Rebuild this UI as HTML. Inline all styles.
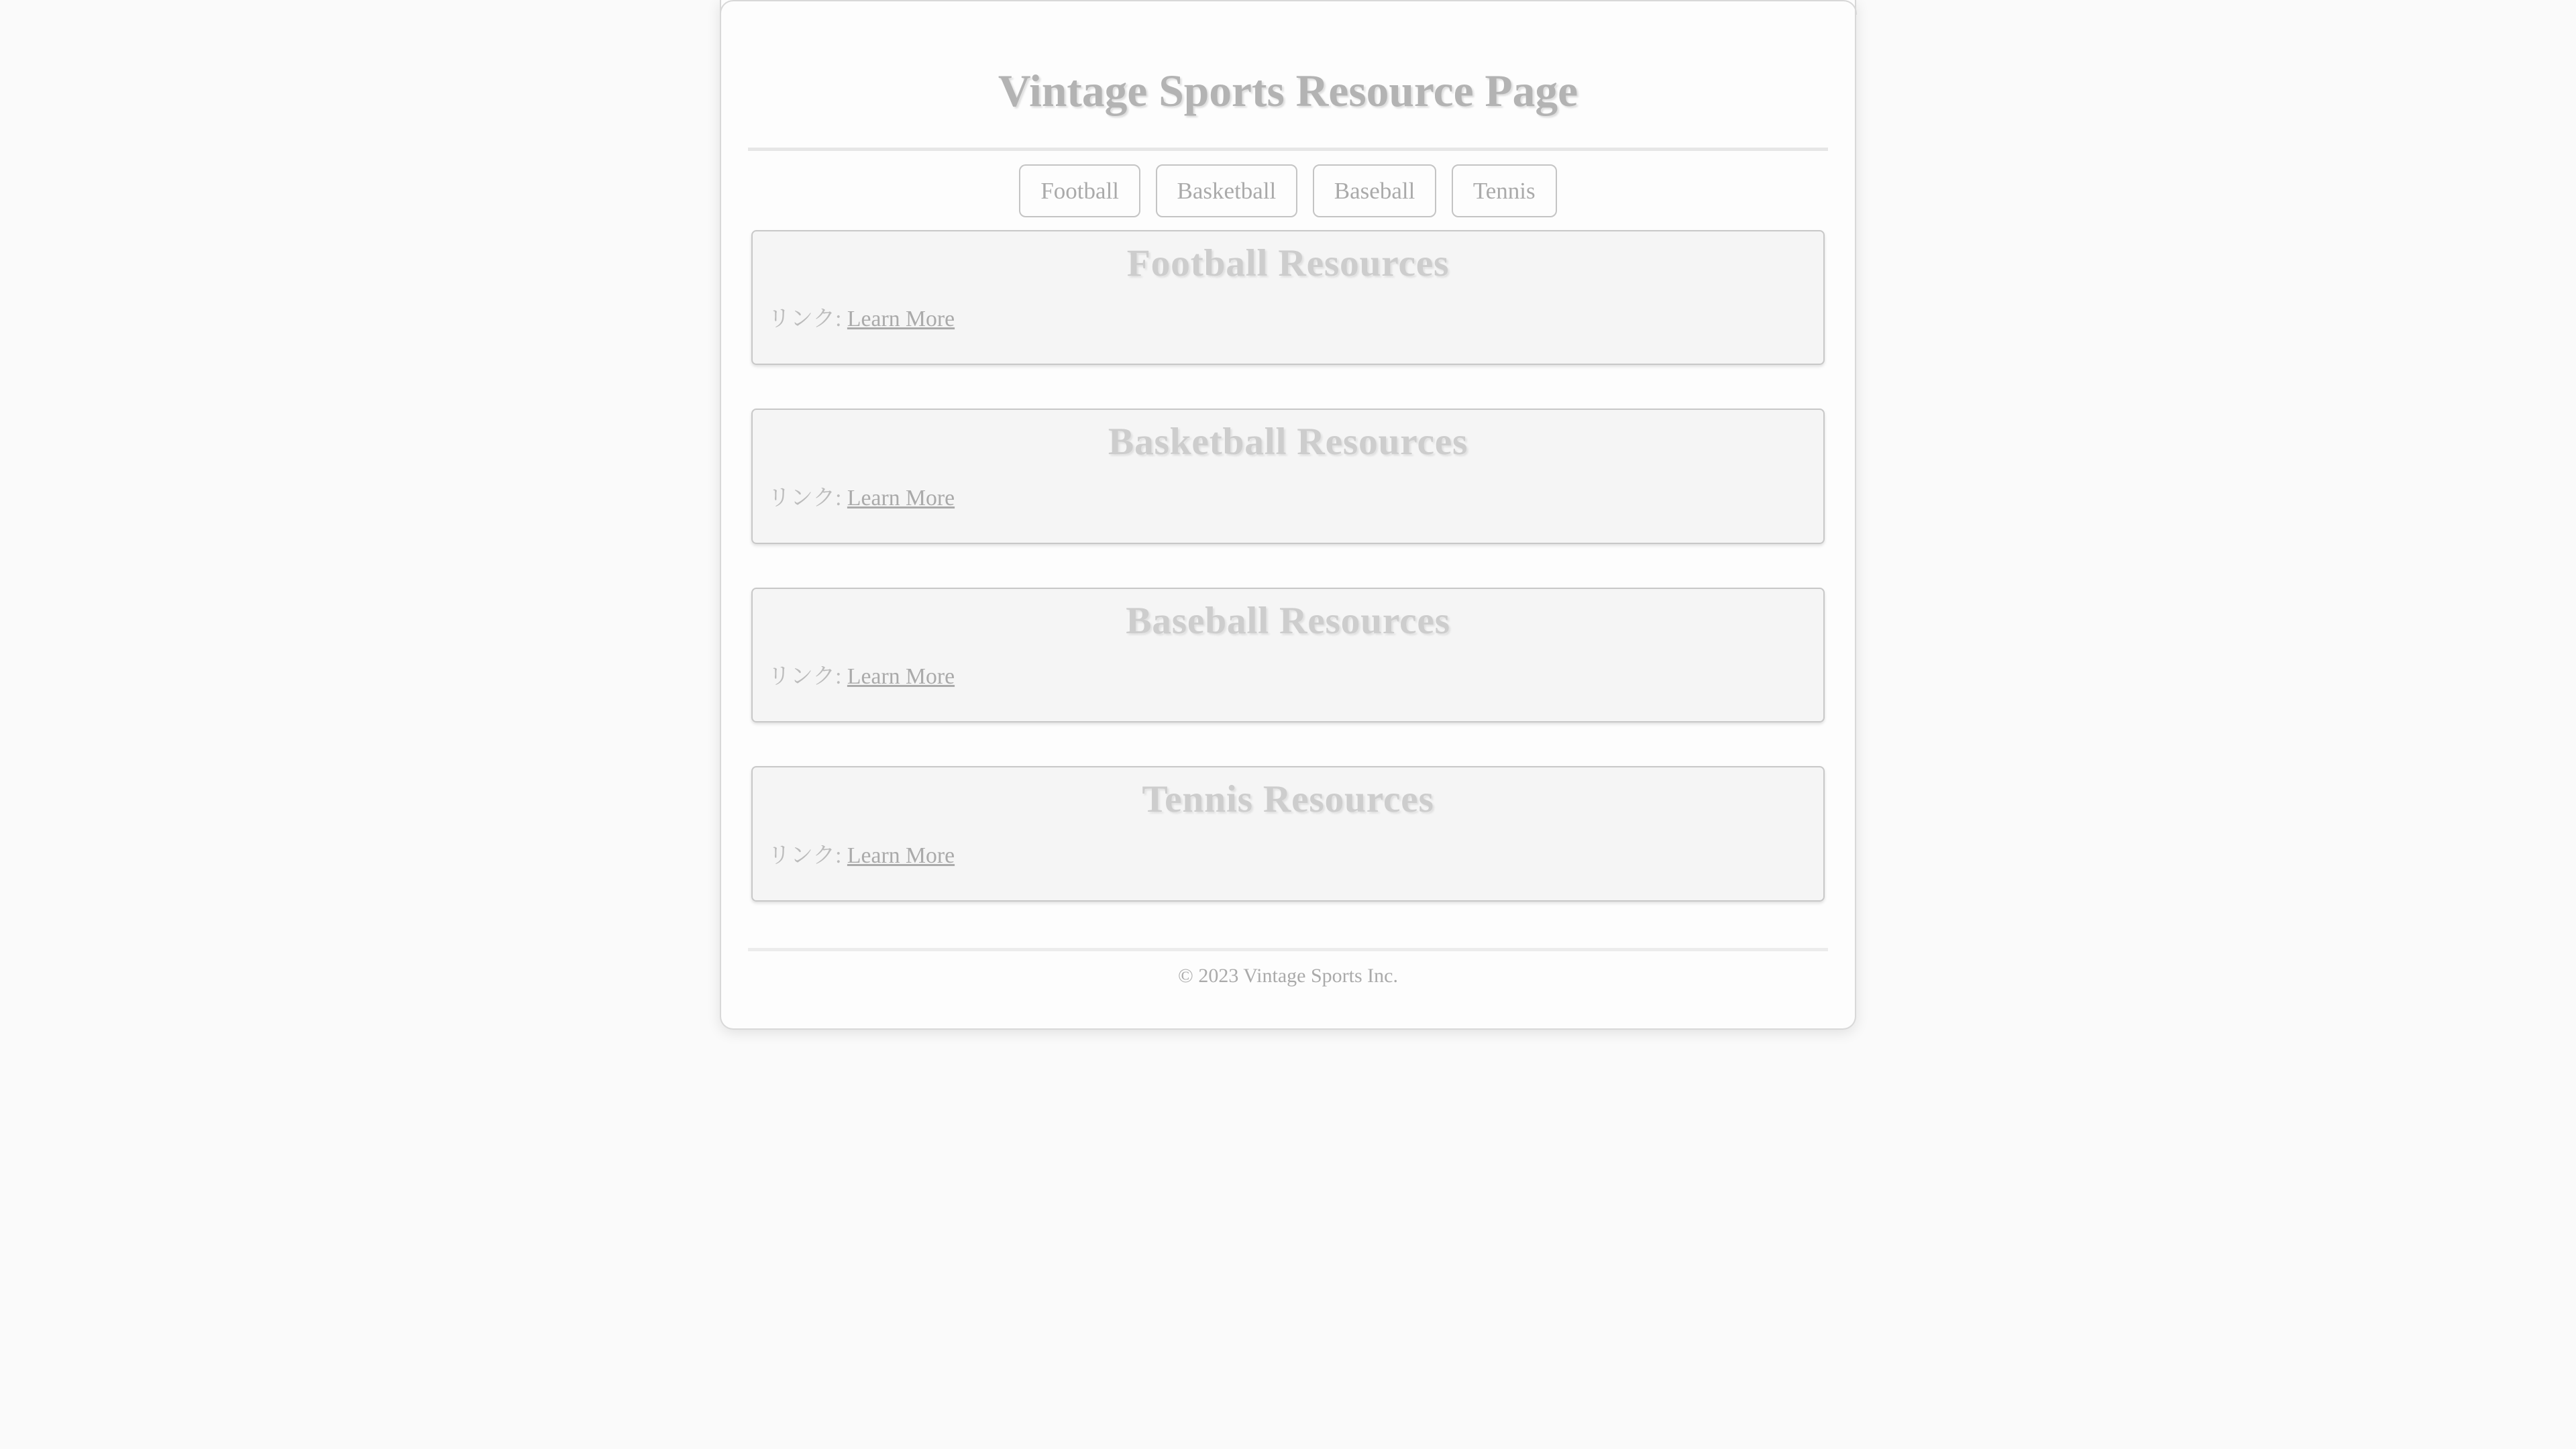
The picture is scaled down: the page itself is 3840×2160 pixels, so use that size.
<!DOCTYPE html>
<html><head><meta charset="utf-8"><style>
html{zoom:2.5}
body{margin:0;background:#fafafa;font-family:"Liberation Serif","Noto Serif CJK SC",serif;width:1536px;height:864px;overflow:hidden}
.c{width:640px;margin:0 auto;padding:0 18px;height:613px;background:#fdfdfd;border:1px solid #d8d8d8;border-top:none;border-radius:0 0 8px 8px;box-shadow:0 2px 8px rgba(0,0,0,.1);position:relative;top:0}
.c:before{content:"";position:absolute;left:-1px;right:-1px;top:0;height:8px;border:1px solid #d8d8d8;border-bottom:none;border-radius:8px 8px 0 0}
.hd{height:88px;border-bottom:2px solid #e6e6e6;text-align:center;margin:0 -2px}
h1{margin:0;padding-top:39px;line-height:30px;font-size:27px;color:#b3b3b3;font-weight:bold;text-shadow:1px 1px 1px #ddd}
.nav{text-align:center;margin:8px 0 8px;height:31px}
.nav span{display:inline-block;height:30px;line-height:30px;padding:0 12px;border:1px solid #c4c4c4;border-radius:4px;margin:0 4.5px;font-size:14px;color:#aaa;background:#fdfdfd}
.s{height:79px;background:#f5f5f5;border:1px solid #c8c8c8;border-radius:3px;box-shadow:0 1px 2px rgba(0,0,0,.12);margin-bottom:26px;position:relative}
.s h2{margin:0;text-align:center;font-size:23px;line-height:26px;padding-top:6px;color:#cdcdcd;text-shadow:1px 1px 1px #e0e0e0;letter-spacing:.3px}
.s p{position:absolute;left:9px;top:41px;margin:0;font-size:13.5px;color:#bbb}
.s a{color:#aaa;text-decoration:underline}
.ft{position:absolute;left:16px;right:16px;top:565px;border-top:2px solid #ececec;text-align:center;font-size:12px;color:#aaa;padding-top:8px}
</style></head><body>
<div class="c">
<div class="hd"><h1>Vintage Sports Resource Page</h1></div>
<div class="nav"><span>Football</span><span>Basketball</span><span>Baseball</span><span>Tennis</span></div>
<div class="s"><h2>Football Resources</h2><p>リンク: <a>Learn More</a></p></div>
<div class="s"><h2>Basketball Resources</h2><p>リンク: <a>Learn More</a></p></div>
<div class="s"><h2>Baseball Resources</h2><p>リンク: <a>Learn More</a></p></div>
<div class="s"><h2>Tennis Resources</h2><p>リンク: <a>Learn More</a></p></div>
<div class="ft">© 2023 Vintage Sports Inc.</div>
</div>
</body></html>
